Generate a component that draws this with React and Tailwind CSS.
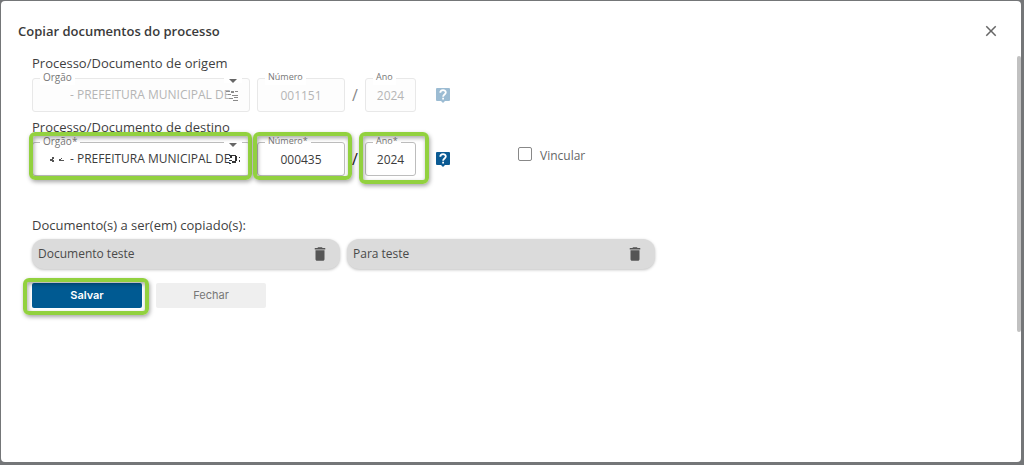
import React from 'react';
import { MdClose, MdDelete } from 'react-icons/md';

const documents = [
  { id: 1, name: 'Documento teste' },
  { id: 2, name: 'Para teste' }
];

const Highlight = ({ className }) => (
  <span
    aria-hidden="true"
    className={`
      pointer-events-none absolute rounded-md border-4 border-[#92d13f]
      shadow-[1px_2px_4px_rgba(0,0,0,0.35),inset_1px_2px_4px_rgba(0,0,0,0.35)]
      ${className}
    `}
  />
);

const FieldLabel = ({ htmlFor, small, children }) => (
  <label
    htmlFor={htmlFor}
    className={`absolute -top-[9px] left-2 bg-white px-[3px] leading-4 text-[#777] ${small ? 'text-[9px]' : 'text-[10px]'}`}
  >
    {children}
  </label>
);

const OriginMask = () => (
  <svg className="pointer-events-none absolute right-3 top-3 h-3 w-3" viewBox="0 0 12 12" fill="#8a8a8a" aria-hidden="true">
    <path d="M0 1h4v1H0zM5 1h3v2H5zM9 1h3v1H9zM2 4h3v1H2zM6 5h6v1H6zM8 7h4v1H8zM3 8h4v1H3zM7 10h5v1H7z" />
  </svg>
);

const TargetMask = () => (
  <>
    <svg className="pointer-events-none absolute left-4 top-3.5 h-2 w-[18px]" viewBox="0 0 18 8" fill="#555" aria-hidden="true">
      <path d="M2 3h2v2H2zM4 1h2v2H4zM4 3h1v3H4zM5 4h1v2H5zM11 3h2v2h-2zM13 2h1v1h-1zM13 4h3v1h-3z" />
    </svg>
    <svg className="pointer-events-none absolute right-2.5 top-3 h-3 w-3" viewBox="0 0 12 12" fill="#333" aria-hidden="true">
      <path d="M1 1h7v1H1zM2 2h2v2H2zM7 2h2v5H7zM1 6h3v1H1zM4 7h4v2H4zM1 9h2v1H1zM11 3h1v1h-1zM11 6h1v2h-1z" />
    </svg>
  </>
);

const HelpButton = ({ disabled }) => (
  <button type="button" aria-label="Ajuda" disabled={disabled} className="ml-5 shrink-0">
    <svg className={`h-[15px] w-3.5 ${disabled ? 'opacity-40' : ''}`} viewBox="0 0 14 15" aria-hidden="true">
      <path d="M1 0h12a1 1 0 0 1 1 1v11a1 1 0 0 1-1 1H9l-2 2-2-2H1a1 1 0 0 1-1-1V1a1 1 0 0 1 1-1z" fill="#0b5a93" />
      <path d="M4.3 4.8C4.3 1.3 9.8 1.4 9.8 4.6c0 1.9-2.7 2-2.7 4.2" fill="none" stroke="#fff" strokeWidth="1.8" />
      <path d="M6.2 9.8H8v1.7H6.2z" fill="#fff" />
    </svg>
  </button>
);

const ProcessFields = ({ id, title, number, year, disabled, children }) => {
  const mark = disabled ? '' : '*';
  const box = disabled
    ? 'border-[#e8e8e8] bg-[#fdfdfd] text-[#b5b5b5]'
    : 'border-[#bdbdbd] bg-white text-[#3c3c3c]';

  return (
    <section>
      <h2 className="mb-1.5 text-[13px] leading-[18px] text-[#3f3f3f]">{title}</h2>
      <div className="flex items-center">
        <div className="relative mr-[7px] w-[218px] shrink-0">
          <select
            id={`${id}-orgao`}
            disabled={disabled}
            className={`block h-[34px] w-full appearance-none rounded-[3px] border pl-[37px] text-xs opacity-100 ${box}`}
          >
            <option>- PREFEITURA MUNICIPAL DE</option>
          </select>
          <FieldLabel htmlFor={`${id}-orgao`}>Orgão{mark}</FieldLabel>
          <span aria-hidden="true" className="pointer-events-none absolute -top-px right-2 flex h-1.5 w-[18px] items-end justify-center bg-white">
            <svg className="h-1 w-2" viewBox="0 0 8 4" fill="#666">
              <path d="M0 0h8L4 4z" />
            </svg>
          </span>
          {disabled ? <OriginMask /> : <TargetMask />}
          {!disabled && <Highlight className="-left-[3px] -right-0.5 -bottom-1 -top-2.5" />}
        </div>
        <div className="relative w-[88px] shrink-0">
          <input
            id={`${id}-numero`}
            type="text"
            defaultValue={number}
            disabled={disabled}
            className={`block h-[34px] w-full rounded-[3px] border text-center text-xs ${box}`}
          />
          <FieldLabel htmlFor={`${id}-numero`} small>Número{mark}</FieldLabel>
          {!disabled && <Highlight className="-bottom-1 -left-1 -right-[7px] -top-2.5" />}
        </div>
        <span className={`w-5 text-center text-base ${disabled ? 'text-[#888]' : 'text-[#222]'}`}>/</span>
        <div className="relative w-[51px] shrink-0">
          <input
            id={`${id}-ano`}
            type="text"
            defaultValue={year}
            disabled={disabled}
            className={`block h-[34px] w-full rounded-[3px] border text-center text-xs ${box}`}
          />
          <FieldLabel htmlFor={`${id}-ano`} small>Ano{mark}</FieldLabel>
          {!disabled && <Highlight className="-bottom-2 -left-1.5 -right-[13px] -top-2.5" />}
        </div>
        <HelpButton disabled={disabled} />
        {children}
      </div>
    </section>
  );
};

const CopyDocumentsDialog = () => {
  return (
    <div className="flex min-h-screen bg-[#747678] pb-[3px] pl-px pr-[3px] pt-px font-['Open_Sans',sans-serif]">
      <div role="dialog" aria-labelledby="dialog-title" className="relative flex-1 rounded bg-white">
        <header className="flex items-center justify-between pb-1 pl-[17px] pr-[21px] pt-3">
          <h1 id="dialog-title" className="text-[13px] font-semibold leading-9 text-[#3a3a3a]">
            Copiar documentos do processo
          </h1>
          <button type="button" aria-label="Fechar janela" className="text-[#666]">
            <MdClose className="h-[18px] w-[18px]" />
          </button>
        </header>

        <div aria-hidden="true" className="absolute right-0 top-[55px] h-[276px] w-1 rounded-sm bg-[#c1c1c1]" />

        <form className="px-[31px] pb-8 pt-px">
          <div className="space-y-1.5">
            <ProcessFields
              id="origem"
              title="Processo/Documento de origem"
              number="001151"
              year="2024"
              disabled
            />
            <ProcessFields
              id="destino"
              title="Processo/Documento de destino"
              number="000435"
              year="2024"
            >
              <label className="ml-[68px] flex items-center gap-2 text-xs text-[#666]">
                <span className="flex h-6 items-start">
                  <input type="checkbox" className="h-3.5 w-3.5 appearance-none rounded-[2px] border border-[#888] bg-white checked:bg-[#005a92]" />
                </span>
                <span className="pb-1.5">Vincular</span>
              </label>
            </ProcessFields>
          </div>

          <h2 className="mb-[5px] mt-10 text-[13px] leading-[18px] text-[#3f3f3f]">
            Documento(s) a ser(em) copiado(s):
          </h2>
          <ul className="flex flex-wrap gap-[7px]">
            {documents.map((doc) => (
              <li
                key={doc.id}
                className="flex h-[30px] w-[308px] items-center justify-between rounded-xl bg-[#dbdbdb] pl-1.5 pr-[11px] text-xs text-[#4a4a4a] shadow-[0_1px_3px_rgba(0,0,0,0.25)]"
              >
                {doc.name}
                <button type="button" aria-label={`Remover ${doc.name}`} className="text-[#555]">
                  <MdDelete className="h-[18px] w-[18px]" />
                </button>
              </li>
            ))}
          </ul>

          <div className="mt-3.5 flex gap-3.5 font-['Inter','Open_Sans',sans-serif]">
            <div className="relative">
              <button type="submit" className="block h-[25px] w-[110px] rounded-[2px] bg-[#005a92] text-[11px] font-semibold text-white">
                Salvar
              </button>
              <Highlight className="-bottom-[7px] -left-[9px] -right-[7px] -top-[5px]" />
            </div>
            <button type="button" className="h-[25px] w-[110px] rounded-[2px] bg-[#efefef] text-[11px] text-[#777]">
              Fechar
            </button>
          </div>
        </form>
      </div>
    </div>
  );
};

export default CopyDocumentsDialog;
